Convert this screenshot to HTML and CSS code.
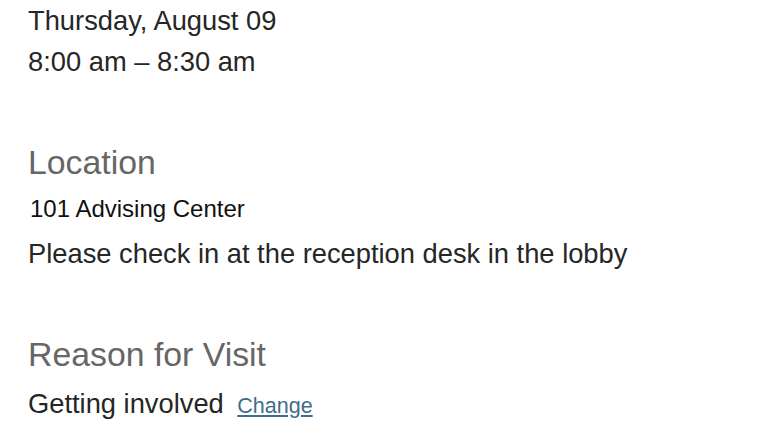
FILE: index.html
```html
<!DOCTYPE html>
<html>
<head>
<meta charset="utf-8">
<link rel="stylesheet" href="styles.css">
</head>
<body>
<div class="page">
  <section class="when">
    <p class="line">Thursday, August 09</p>
    <p class="line">8:00 am – 8:30 am</p>
  </section>
  <section class="block location">
    <h2 class="heading">Location</h2>
    <p class="room">101 Advising Center</p>
    <p class="line note">Please check in at the reception desk in the lobby</p>
  </section>
  <section class="block reason">
    <h2 class="heading">Reason for Visit</h2>
    <p class="line purpose">Getting involved <a class="change" href="#">Change</a></p>
  </section>
</div>
</body>
</html>
```
FILE: styles.css
```css
html, body {
  margin: 0;
  padding: 0;
  background: #ffffff;
}
.page {
  padding: 0 0 0 28px;
  font-family: "Liberation Sans", Arial, sans-serif;
  color: #262626;
}
.line {
  margin: 0;
  font-size: 27.3px;
  line-height: 41px;
}
.block.location {
  margin-top: 60px;
}
.block.reason {
  margin-top: 60px;
}
.heading {
  margin: 0;
  font-weight: normal;
  font-size: 33.8px;
  line-height: 41px;
  color: #666666;
}
.room {
  margin: 5px 0 0 2px;
  font-size: 24px;
  line-height: 41px;
  color: #111111;
}
.note {
  margin-top: 4px;
}
.purpose {
  margin-top: 8px;
}
.change {
  margin-left: 6px;
  font-size: 21.5px;
  color: #3d6d8c;
  text-decoration: underline;
}
```
